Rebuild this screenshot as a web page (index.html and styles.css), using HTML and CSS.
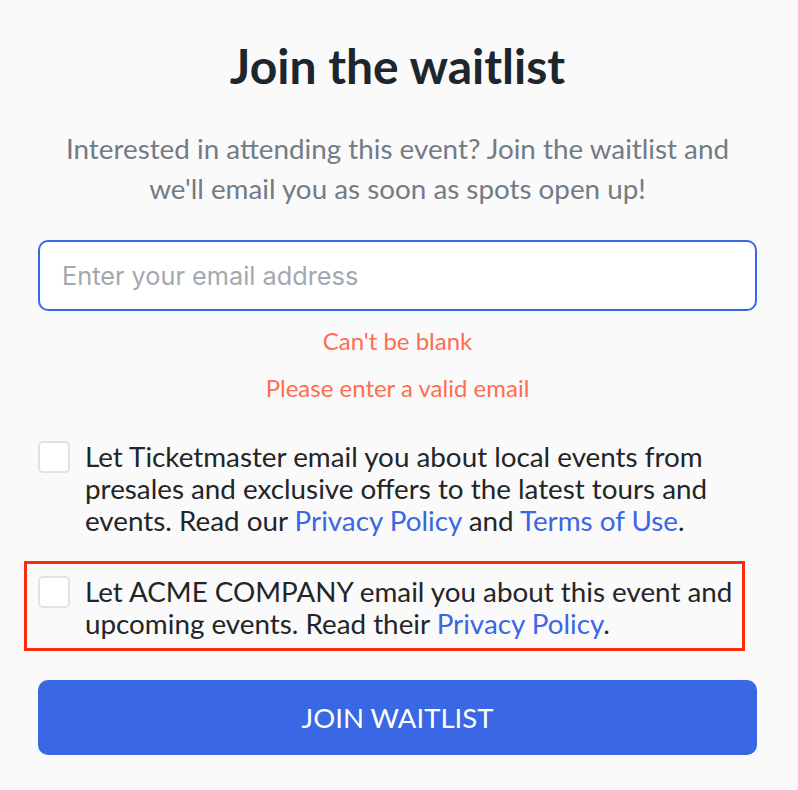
FILE: index.html
```html
<!DOCTYPE html>
<html lang="en">
<head>
<meta charset="UTF-8">
<meta name="viewport" content="width=device-width, initial-scale=1.0">
<title>Join the waitlist</title>
<link rel="stylesheet" href="styles.css">
</head>
<body>

<div class="waitlist">
  <h1>Join the waitlist</h1>
  <p class="intro">Interested in attending this event? Join the waitlist and we'll email you as soon as spots open up!</p>

  <form class="waitlist-form">
    <input type="email" class="email-input" placeholder="Enter your email address">
    <div class="errors">
      <span>Can't be blank</span>
      <span>Please enter a valid email</span>
    </div>

    <label class="consent">
      <span class="box"></span>
      <span class="consent-text">Let Ticketmaster email you about local events from presales and exclusive offers to the latest tours and events. Read our <a href="#">Privacy Policy</a> and <a href="#">Terms of Use</a>.</span>
    </label>

    <label class="consent highlighted">
      <span class="box"></span>
      <span class="consent-text">Let ACME COMPANY email you about this event and upcoming events. Read their <a href="#">Privacy Policy</a>.</span>
    </label>

    <button type="submit">JOIN WAITLIST</button>
  </form>
</div>

</body>
</html>
```

FILE: styles.css
```css
body {
  margin: 0;
  background-color: #fafafa;
  font-family: Lato, "Open Sans", sans-serif;
  color: #222;
}

.waitlist {
  padding: 36px 41px 0 38px;
}

h1 {
  margin: 0;
  text-align: center;
  font-size: 48px;
  font-weight: 700;
  line-height: 60px;
  color: #1d252d;
}

.intro {
  margin: 33px 16px 31px;
  text-align: center;
  font-size: 27.8px;
  line-height: 40px;
  color: #737b84;
}

.email-input {
  display: block;
  box-sizing: border-box;
  width: 100%;
  height: 71px;
  padding: 0 22px;
  border: 2px solid #3a67e3;
  border-radius: 10px;
  background: #fff;
  font-family: Inter, "Liberation Sans", sans-serif;
  font-size: 25.3px;
  outline: none;
}

.email-input::placeholder {
  color: #a2a8b0;
}

.errors {
  display: flex;
  flex-direction: column;
  align-items: center;
  gap: 19px;
  margin-top: 16px;
  font-size: 24px;
  line-height: 28px;
  color: #ff6d4e;
}

.consent {
  display: flex;
  gap: 15px;
  margin-top: 39px;
  font-size: 27.8px;
  line-height: 32px;
  color: #232526;
}

.box {
  flex: none;
  box-sizing: border-box;
  width: 32px;
  height: 32px;
  border: 2px solid #dfe3e8;
  border-radius: 5px;
  background: #fff;
}

.consent a {
  color: #3a67e3;
  text-decoration: none;
}

.consent.highlighted {
  margin: 24px 12px 0 -14px;
  padding: 12px 8px 8px 11px;
  border: 3px solid #fd2a0e;
}

button {
  display: block;
  width: 100%;
  height: 75px;
  margin-top: 29px;
  border: none;
  border-radius: 10px;
  background-color: #3a67e3;
  color: #fff;
  font-family: Lato, "Open Sans", sans-serif;
  font-size: 27.5px;
  font-weight: 400;
  cursor: pointer;
}
```
